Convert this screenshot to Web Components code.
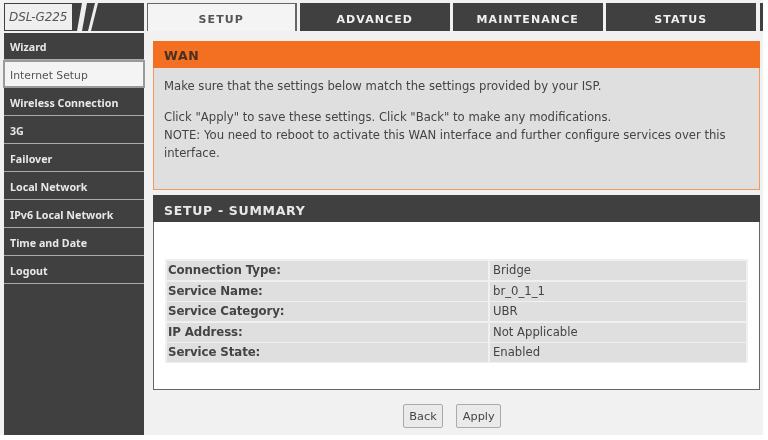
<!DOCTYPE html>
<html>
<head>
<meta charset="utf-8">
<title>DSL-G225</title>
<style>
    html, body { margin: 0; background: #fff; }
    body { font-family: "DejaVu Sans", sans-serif; color: #444; overflow: hidden; }
</style>
</head>
<body>
<router-page>
    <router-logo slot="logo" model="DSL-G225"></router-logo>
    <top-tab slot="tabs" active>SETUP</top-tab>
    <top-tab slot="tabs">ADVANCED</top-tab>
    <top-tab slot="tabs">MAINTENANCE</top-tab>
    <top-tab slot="tabs">STATUS</top-tab>
    <nav-item slot="nav">Wizard</nav-item>
    <nav-item slot="nav" active>Internet Setup</nav-item>
    <nav-item slot="nav">Wireless Connection</nav-item>
    <nav-item slot="nav">3G</nav-item>
    <nav-item slot="nav">Failover</nav-item>
    <nav-item slot="nav">Local Network</nav-item>
    <nav-item slot="nav">IPv6 Local Network</nav-item>
    <nav-item slot="nav">Time and Date</nav-item>
    <nav-item slot="nav">Logout</nav-item>

    <wan-panel heading="WAN">
        <p>Make sure that the settings below match the settings provided by your ISP.</p>
        <p>Click "Apply" to save these settings. Click "Back" to make any modifications.<br>NOTE: You need to reboot to activate this WAN interface and further configure services over this interface.</p>
    </wan-panel>
    <summary-panel heading="SETUP - SUMMARY">
        <summary-row label="Connection Type:">Bridge</summary-row>
        <summary-row label="Service Name:">br_0_1_1</summary-row>
        <summary-row label="Service Category:">UBR</summary-row>
        <summary-row label="IP Address:">Not Applicable</summary-row>
        <summary-row label="Service State:">Enabled</summary-row>
    </summary-panel>
    <form-buttons>
        <push-button>Back</push-button>
        <push-button>Apply</push-button>
    </form-buttons>
</router-page>

<script>
class RouterPage extends HTMLElement {
    constructor() {
        super();
        this.attachShadow({ mode: 'open' });
        this.shadowRoot.innerHTML = `
            <style>
                :host {
                    display: grid;
                    grid-template-columns: 140px 1fr;
                    grid-template-rows: 28px 1fr;
                    column-gap: 3px;
                    row-gap: 2px;
                    width: 759px;
                    height: 432px;
                    padding: 3px 0 0 4px;
                    background: #f1f1f1;
                    filter: blur(0.5px);
                }
                .tabs { display: flex; gap: 3.5px; }
                .nav {
                    background: #404040;
                    display: flex;
                    flex-direction: column;
                    gap: 2px;
                }
                main {
                    padding: 8px 3px 0 6px;
                    display: flex;
                    flex-direction: column;
                }
                .sliver { width: 3px; background: #404040; margin-left: 1px; }
            </style>
            <slot name="logo"></slot>
            <div class="tabs"><slot name="tabs"></slot><div class="sliver"></div></div>
            <div class="nav"><slot name="nav"></slot></div>
            <main><slot></slot></main>
        `;
    }
}

class RouterLogo extends HTMLElement {
    constructor() {
        super();
        this.attachShadow({ mode: 'open' });
    }

    connectedCallback() {
        this.shadowRoot.innerHTML = `
            <style>
                :host { display: block; position: relative; background: #404040; overflow: hidden; }
                .name {
                    display: flex;
                    align-items: center;
                    height: 26px;
                    width: 67px;
                    margin: 1px 0 0 1px;
                    padding-left: 4px;
                    box-sizing: border-box;
                    background: #efefef;
                    color: #555;
                    font: italic 12px "DejaVu Sans", sans-serif;
                    letter-spacing: -0.1px;
                    white-space: nowrap;
                }
                svg { position: absolute; left: 70px; top: 0; }
            </style>
            <div class="name">${this.getAttribute('model')}</div>
            <svg width="40" height="28" viewBox="0 0 40 28">
                <polygon points="3,28 8,28 13,0 8,0" fill="#efefef"/>
                <polygon points="14,28 17,28 24,0 21,0" fill="#efefef"/>
            </svg>
        `;
    }
}

class TopTab extends HTMLElement {
    constructor() {
        super();
        this.attachShadow({ mode: 'open' });
        this.shadowRoot.innerHTML = `
            <style>
                :host {
                    flex: 0 0 149.5px;
                    display: flex;
                    align-items: center;
                    justify-content: center;
                    box-sizing: border-box;
                    background: #404040;
                    color: #f0f0f0;
                    font: bold 11px "DejaVu Sans", sans-serif;
                    letter-spacing: 1.1px;
                    padding-top: 4px;
                }
                :host([active]) {
                    background: #f4f4f4;
                    color: #555;
                    border: solid #666;
                    border-width: 1px 2px 0 1px;
                }
            </style>
            <slot></slot>
        `;
    }
}

class NavItem extends HTMLElement {
    constructor() {
        super();
        this.attachShadow({ mode: 'open' });
        this.shadowRoot.innerHTML = `
            <style>
                :host {
                    display: flex;
                    align-items: center;
                    box-sizing: border-box;
                    height: 26px;
                    padding: 2px 0 0 6px;
                    background: #404040;
                    color: #e8e8e8;
                    font: bold 10.7px "Noto Sans", sans-serif;
                    box-shadow: 0 1px 0 #aaa;
                }
                :host([active]) {
                    background: #f4f4f4;
                    color: #555;
                    font: 10.8px "DejaVu Sans", sans-serif;
                    outline: 2px solid #9a9a9a;
                    outline-offset: -1px;
                    box-shadow: none;
                }
            </style>
            <slot></slot>
        `;
    }
}

class WanPanel extends HTMLElement {
    constructor() {
        super();
        this.attachShadow({ mode: 'open' });
    }

    connectedCallback() {
        this.shadowRoot.innerHTML = `
            <style>
                :host {
                    display: block;
                    height: 149px;
                    box-sizing: border-box;
                    background: #dfdfdf;
                    border: 1px solid #f09a60;
                    border-top: 0;
                    margin-bottom: 5px;
                }
                h2 {
                    margin: 0 -1px;
                    height: 27px;
                    box-sizing: border-box;
                    padding: 2px 0 0 11px;
                    display: flex;
                    align-items: center;
                    background: #f36f21;
                    color: #4a3020;
                    font: bold 12.5px "DejaVu Sans", sans-serif;
                    letter-spacing: 0.7px;
                }
                .body {
                    padding: 9px 20px 0 10px;
                    font-size: 11.65px;
                    line-height: 18px;
                    color: #444;
                }
                ::slotted(p) { margin: 0 0 13px; }
            </style>
            <h2>${this.getAttribute('heading')}</h2>
            <div class="body"><slot></slot></div>
        `;
    }
}

class SummaryPanel extends HTMLElement {
    constructor() {
        super();
        this.attachShadow({ mode: 'open' });
    }

    connectedCallback() {
        this.shadowRoot.innerHTML = `
            <style>
                :host {
                    display: block;
                    height: 195px;
                    box-sizing: border-box;
                    background: #fff;
                    border: 1px solid #666;
                    border-top: 0;
                }
                h2 {
                    margin: 0 -1px;
                    height: 27px;
                    box-sizing: border-box;
                    padding: 3px 0 0 11px;
                    display: flex;
                    align-items: center;
                    background: #404040;
                    color: #e8e8e8;
                    font: bold 12.5px "DejaVu Sans", sans-serif;
                    letter-spacing: 0.7px;
                }
                .rows {
                    margin: 37px 11px 0 11px;
                    padding: 2px 2px;
                    background: #f0f0f0;
                    display: flex;
                    flex-direction: column;
                    gap: 3px;
                }
            </style>
            <h2>${this.getAttribute('heading')}</h2>
            <div class="rows"><slot></slot></div>
        `;
    }
}

class SummaryRow extends HTMLElement {
    constructor() {
        super();
        this.attachShadow({ mode: 'open' });
    }

    connectedCallback() {
        this.shadowRoot.innerHTML = `
            <style>
                :host {
                    display: grid;
                    grid-template-columns: 321px 1fr;
                    column-gap: 2px;
                    height: 17.5px;
                    line-height: 19px;
                    font-size: 11.65px;
                    color: #444;
                }
                div { background: #dfdfdf; padding-left: 3px; white-space: nowrap; }
                .k { font-weight: bold; font-size: 11.8px; letter-spacing: -0.1px; padding-left: 1px; }
            </style>
            <div class="k">${this.getAttribute('label')}</div>
            <div><slot></slot></div>
        `;
    }
}

class FormButtons extends HTMLElement {
    constructor() {
        super();
        this.attachShadow({ mode: 'open' });
        this.shadowRoot.innerHTML = `
            <style>
                :host {
                    display: flex;
                    justify-content: center;
                    gap: 13px;
                    padding: 14px 9px 0 0;
                }
            </style>
            <slot></slot>
        `;
    }
}

class PushButton extends HTMLElement {
    constructor() {
        super();
        this.attachShadow({ mode: 'open' });
        this.shadowRoot.innerHTML = `
            <style>
                :host {
                    display: flex;
                    align-items: center;
                    height: 24px;
                    padding: 0 5.5px;
                    box-sizing: border-box;
                    background: #eaeaea;
                    border: 1px solid #aaa;
                    border-radius: 2px;
                    color: #444;
                    font: 11.3px "DejaVu Sans", sans-serif;
                }
            </style>
            <slot></slot>
        `;
    }
}

customElements.define('router-page', RouterPage);
customElements.define('router-logo', RouterLogo);
customElements.define('top-tab', TopTab);
customElements.define('nav-item', NavItem);
customElements.define('wan-panel', WanPanel);
customElements.define('summary-panel', SummaryPanel);
customElements.define('summary-row', SummaryRow);
customElements.define('form-buttons', FormButtons);
customElements.define('push-button', PushButton);
</script>
</body>
</html>
